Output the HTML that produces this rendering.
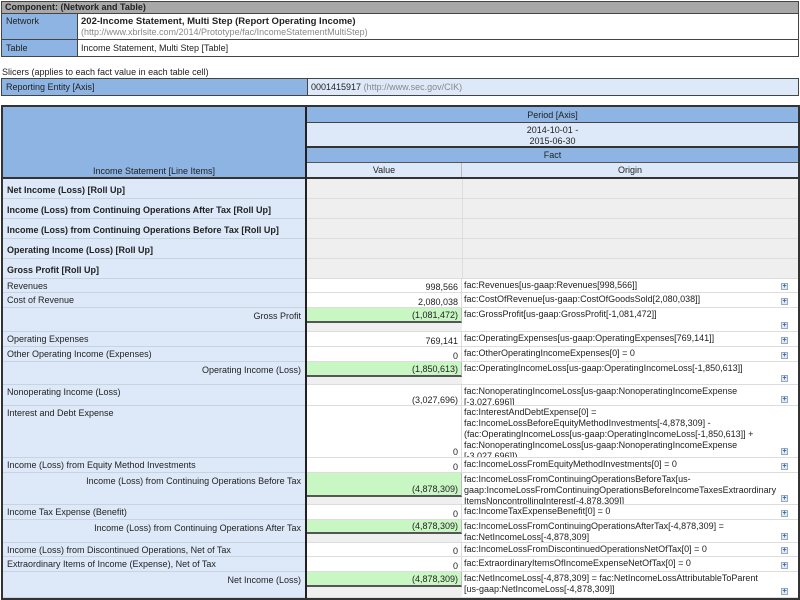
<!DOCTYPE html>
<html><head><meta charset="utf-8"><style>
body{margin:0;width:800px;height:600px;background:#fff;position:relative;overflow:hidden}
.c{position:absolute;box-sizing:border-box;font:9px "Liberation Sans",sans-serif;color:#222;overflow:hidden;line-height:11px}
.hb{background:#8db4e2}
.lb{background:#dde9f8}
.gr{background:#efefef}
.g{color:#888}
.b{font-weight:bold}
.pl{position:absolute;width:7px;height:7px;border:1px solid #9ab;background:#dfe9f5;box-sizing:border-box;font:bold 7px/5px "Liberation Sans",sans-serif;color:#36a;text-align:center}
</style></head><body>
<!-- top component -->
<div class="c b" style="left:1px;top:1px;width:798px;height:13px;background:#a8a8a8;border:1px solid #444;padding-left:3px;line-height:11px">Component: (Network and Table)</div>
<div class="c hb" style="left:1px;top:14px;width:77px;height:26px;border:1px solid #444;border-top:0;padding:2px 4px">Network</div>
<div class="c" style="left:78px;top:14px;width:721px;height:26px;border:1px solid #444;border-top:0;border-left:0;padding:2px 3px;line-height:11px"><span class="b" style="font-size:9.5px">202-Income Statement, Multi Step (Report Operating Income)</span><br><span class="g">(http://www.xbrlsite.com/2014/Prototype/fac/IncomeStatementMultiStep)</span></div>
<div class="c hb" style="left:1px;top:40px;width:77px;height:17px;border:1px solid #444;border-top:0;padding:3px 4px">Table</div>
<div class="c" style="left:78px;top:40px;width:721px;height:17px;border:1px solid #444;border-top:0;border-left:0;padding:3px 3px">Income Statement, Multi Step [Table]</div>
<div class="c" style="left:2px;top:67px;width:400px;height:12px">Slicers (applies to each fact value in each table cell)</div>
<div class="c hb" style="left:1px;top:78px;width:307px;height:18px;border:1px solid #444;padding:3px 4px">Reporting Entity [Axis]</div>
<div class="c lb" style="left:308px;top:78px;width:491px;height:18px;border:1px solid #444;border-left:0;padding:3px 3px">0001415917 <span class="g">(http://www.sec.gov/CIK)</span></div>
<!-- main table -->
<div class="c" style="left:1px;top:105px;width:799px;height:495px;border:2px solid #333;border-bottom:2px solid #333"></div>
<div class="c hb" style="left:3px;top:107px;width:304px;height:71px;border-right:2px solid #222;text-align:center;padding-top:59px">Income Statement [Line Items]</div>
<div class="c hb" style="left:307px;top:107px;width:491px;height:16px;text-align:center;padding-top:3px;border-bottom:1px solid #444">Period [Axis]</div>
<div class="c lb" style="left:307px;top:123px;width:491px;height:25px;text-align:center;padding-top:2px;border-bottom:2px solid #333">2014-10-01 -<br>2015-06-30</div>
<div class="c hb" style="left:307px;top:148px;width:491px;height:15px;text-align:center;padding-top:2px;border-bottom:1px solid #555">Fact</div>
<div class="c lb" style="left:307px;top:163px;width:155px;height:15px;text-align:center;padding-top:2px;border-right:1px solid #bbb">Value</div>
<div class="c lb" style="left:462px;top:163px;width:336px;height:15px;text-align:center;padding-top:2px">Origin</div>
<div class="c" style="left:3px;top:177px;width:795px;height:2px;background:#333"></div>
<div class="c" style="left:305px;top:107px;width:2px;height:491px;background:#222"></div>

<!-- roll up rows -->
<div class="c lb b" style="left:3px;top:179px;width:302px;height:20px;border-bottom:1px solid #c8d3e0;padding:6px 4px 0">Net Income (Loss) [Roll Up]</div>
<div class="c gr" style="left:307px;top:179px;width:491px;height:20px;border-bottom:1px solid #ddd"></div>
<div class="c lb b" style="left:3px;top:199px;width:302px;height:20px;border-bottom:1px solid #c8d3e0;padding:6px 4px 0">Income (Loss) from Continuing Operations After Tax [Roll Up]</div>
<div class="c gr" style="left:307px;top:199px;width:491px;height:20px;border-bottom:1px solid #ddd"></div>
<div class="c lb b" style="left:3px;top:219px;width:302px;height:20px;border-bottom:1px solid #c8d3e0;padding:6px 4px 0">Income (Loss) from Continuing Operations Before Tax [Roll Up]</div>
<div class="c gr" style="left:307px;top:219px;width:491px;height:20px;border-bottom:1px solid #ddd"></div>
<div class="c lb b" style="left:3px;top:239px;width:302px;height:20px;border-bottom:1px solid #c8d3e0;padding:6px 4px 0">Operating Income (Loss) [Roll Up]</div>
<div class="c gr" style="left:307px;top:239px;width:491px;height:20px;border-bottom:1px solid #ddd"></div>
<div class="c lb b" style="left:3px;top:259px;width:302px;height:20px;border-bottom:1px solid #c8d3e0;padding:6px 4px 0">Gross Profit [Roll Up]</div>
<div class="c gr" style="left:307px;top:259px;width:491px;height:20px;border-bottom:1px solid #ddd"></div>
<div class="c" style="left:462px;top:179px;width:1px;height:100px;background:#ddd"></div>

<!-- data rows generated -->
<div id="rows"></div>
<script>
var R=[
[279,14,"Revenues",0,"998,566","fac:Revenues[us-gaap:Revenues[998,566]]",0],
[293,15,"Cost of Revenue",0,"2,080,038","fac:CostOfRevenue[us-gaap:CostOfGoodsSold[2,080,038]]",0],
[308,24,"Gross Profit",1,"(1,081,472)","fac:GrossProfit[us-gaap:GrossProfit[-1,081,472]]",15],
[332,15,"Operating Expenses",0,"769,141","fac:OperatingExpenses[us-gaap:OperatingExpenses[769,141]]",0],
[347,15,"Other Operating Income (Expenses)",0,"0","fac:OtherOperatingIncomeExpenses[0] = 0",0],
[362,23,"Operating Income (Loss)",1,"(1,850,613)","fac:OperatingIncomeLoss[us-gaap:OperatingIncomeLoss[-1,850,613]]",15],
[385,21,"Nonoperating Income (Loss)",0,"(3,027,696)","fac:NonoperatingIncomeLoss[us-gaap:NonoperatingIncomeExpense<br>[-3,027,696]]",0],
[406,52,"Interest and Debt Expense",0,"0","fac:InterestAndDebtExpense[0] =<br>fac:IncomeLossBeforeEquityMethodInvestments[-4,878,309] -<br>(fac:OperatingIncomeLoss[us-gaap:OperatingIncomeLoss[-1,850,613]] +<br>fac:NonoperatingIncomeLoss[us-gaap:NonoperatingIncomeExpense<br>[-3,027,696]])",0],
[458,15,"Income (Loss) from Equity Method Investments",0,"0","fac:IncomeLossFromEquityMethodInvestments[0] = 0",0],
[473,32,"Income (Loss) from Continuing Operations Before Tax",1,"(4,878,309)","fac:IncomeLossFromContinuingOperationsBeforeTax[us-<br>gaap:IncomeLossFromContinuingOperationsBeforeIncomeTaxesExtraordinary<br>ItemsNoncontrollingInterest[-4,878,309]]",24],
[505,15,"Income Tax Expense (Benefit)",0,"0","fac:IncomeTaxExpenseBenefit[0] = 0",0],
[520,23,"Income (Loss) from Continuing Operations After Tax",1,"(4,878,309)","fac:IncomeLossFromContinuingOperationsAfterTax[-4,878,309] =<br>fac:NetIncomeLoss[-4,878,309]",14],
[543,14,"Income (Loss) from Discontinued Operations, Net of Tax",0,"0","fac:IncomeLossFromDiscontinuedOperationsNetOfTax[0] = 0",0],
[557,15,"Extraordinary Items of Income (Expense), Net of Tax",0,"0","fac:ExtraordinaryItemsOfIncomeExpenseNetOfTax[0] = 0",0],
[572,26,"Net Income (Loss)",1,"(4,878,309)","fac:NetIncomeLoss[-4,878,309] = fac:NetIncomeLossAttributableToParent<br>[us-gaap:NetIncomeLoss[-4,878,309]]",15]
];
var h="";
R.forEach(function(r){
var y=r[0],H=r[1];
h+='<div class="c lb" style="left:3px;top:'+y+'px;width:302px;height:'+H+'px;border-bottom:1px solid #c8d3e0;padding:'+(r[3]?3:2)+'px 4px 0;text-align:'+(r[3]?'right':'left')+'">'+r[2]+'</div>';
if(r[6]){
h+='<div class="c gr" style="left:307px;top:'+y+'px;width:155px;height:'+H+'px;border-bottom:1px solid #ddd"></div>';
h+='<div class="c" style="left:307px;top:'+y+'px;width:155px;height:'+r[6]+'px;background:#c9f7c4;border-bottom:2px solid #555;border-right:1px solid #bbb;text-align:right;padding-right:3px;padding-top:'+(r[6]-13)+'px">'+r[4]+'</div>';
}else{
h+='<div class="c" style="left:307px;top:'+y+'px;width:155px;height:'+H+'px;border-bottom:1px solid #ddd;border-right:1px solid #ddd;text-align:right;padding-right:3px;padding-top:'+(H-11)+'px">'+r[4]+'</div>';
}
h+='<div class="c" style="left:462px;top:'+y+'px;width:336px;height:'+H+'px;border-bottom:1px solid #ddd;padding:1px 2px 0">'+r[5]+'</div>';
h+='<div class="pl" style="left:781px;top:'+(y+H-10)+'px">+</div>';
});
document.getElementById("rows").innerHTML=h;
</script>
</body></html>
